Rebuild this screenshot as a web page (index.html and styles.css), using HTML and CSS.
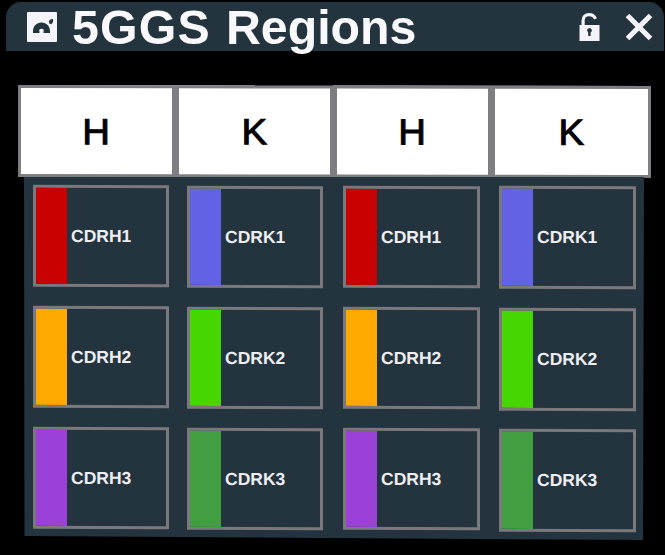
FILE: index.html
```html
<!DOCTYPE html>
<html lang="en">
<head>
<meta charset="utf-8">
<title>5GGS Regions</title>
<link rel="stylesheet" href="styles.css">
</head>
<body>
<main class="window">
  <header class="titlebar">
    <svg class="picture-icon" viewBox="0 0 30 30" aria-hidden="true"><rect width="30" height="30" rx="1" fill="#f5f4fa"/><path d="M6 21v-2c0-4.500 3.500-8.500 8.500-8.500S23 14.500 23 19v2h-6.500v-1.500c1-2-.2-2.800-2-2.800s-3 .8-2 2.800V21z" fill="#23343e"/><path d="M22 9l1.300-1.500 2.700-.5v3l-1.600 2.200-1.900-.4z" fill="#23343e"/></svg>
    <h1 class="title"><span class="code">5GGS</span> Regions</h1>
    <svg class="lock-icon" viewBox="0 0 21 28" aria-hidden="true"><path d="M4.100 13V7.500C4.100 4 6.600 1.600 10 1.600c2.900 0 5.300 1.400 6.500 4.200" fill="none" stroke="#f5f4fa" stroke-width="3.200"/><path d="M.5 12h20v16H.5z" fill="#f5f4fa"/><path d="M8 17.200a2.400 2.400 0 1 1 4.600 1.300l-1 1.200V23H9.200v-3.300z" fill="#23343e"/></svg>
    <svg class="close-icon" viewBox="0 0 28 28" aria-hidden="true"><path d="M2.500 2.500l23 23M25.500 2.500l-23 23" stroke="#f5f4fa" stroke-width="5.200"/></svg>
  </header>
  <section class="chains">
    <div class="chain"><span>H</span></div><div class="chain"><span>K</span></div><div class="chain"><span>H</span></div><div class="chain"><span>K</span></div>
  </section>
  <section class="panel">
    <div class="column">
      <div class="region"><i class="swatch red"></i><span>CDRH1</span></div>
      <div class="region"><i class="swatch orange"></i><span>CDRH2</span></div>
      <div class="region"><i class="swatch purple"></i><span>CDRH3</span></div>
    </div>
    <div class="column second">
      <div class="region"><i class="swatch blue"></i><span>CDRK1</span></div>
      <div class="region"><i class="swatch lime"></i><span>CDRK2</span></div>
      <div class="region"><i class="swatch green"></i><span>CDRK3</span></div>
    </div>
    <div class="column third">
      <div class="region"><i class="swatch red"></i><span>CDRH1</span></div>
      <div class="region"><i class="swatch orange"></i><span>CDRH2</span></div>
      <div class="region"><i class="swatch purple"></i><span>CDRH3</span></div>
    </div>
    <div class="column fourth">
      <div class="region"><i class="swatch blue"></i><span>CDRK1</span></div>
      <div class="region"><i class="swatch lime"></i><span>CDRK2</span></div>
      <div class="region"><i class="swatch green"></i><span>CDRK3</span></div>
    </div>
  </section>
</main>
</body>
</html>
```

FILE: styles.css
```css
* { box-sizing: border-box; }
body {
  margin: 0;
  background: #000;
  font-family: "Liberation Sans", Arial, sans-serif;
}
.window {
  width: 665px;
  height: 555px;
  overflow: hidden;
  padding-top: 2px;
}
.titlebar {
  display: flex;
  align-items: center;
  width: 658px;
  height: 49px;
  margin-left: 6px;
  padding: 0 11px 0 21px;
  border-radius: 15px 15px 0 0;
  background: #23343e;
}
.picture-icon { width: 30px; height: 30px; }
.title {
  margin: 1px auto 0 15px;
  font-size: 48.300px;
  line-height: 49px;
  word-spacing: 1.500px;
  color: #f9f8fc;
  white-space: nowrap;
}
.code { letter-spacing: 1.200px; }
.lock-icon { width: 21px; height: 28px; margin-right: 25px; }
.close-icon { width: 28px; height: 28px; }
.chains {
  display: grid;
  grid-template-columns: 157px 158px 158px 160px;
  height: 92px;
  margin: 34px 0 0 18px;
  transform: translateY(0.500px) skewY(0.080deg);
}
.chain {
  display: flex;
  align-items: center;
  justify-content: center;
  border: 3px solid #7e7d82;
  background: #fff;
  color: #000;
  font-size: 36.500px;
  -webkit-text-stroke: 1px #000;
}
.chain span { transform: translateY(1px) scaleX(1.05); }
.chain + .chain { border-left-width: 4px; }
.panel {
  display: grid;
  grid-template-columns: 135.500px 136px 136.500px 137px;
  column-gap: 19px;
  width: 620px;
  height: 364px;
  margin-left: 24px;
  padding: 8px 0 0 9px;
  background: #23343e;
  clip-path: polygon(0 0, 100% 0, 619px 363px, 0.500px 359px);
}
.column {
  display: grid;
  grid-template-rows: repeat(3, 102px);
  row-gap: 19px;
  align-content: start;
}
.second { padding-top: 0.500px; }
.third { padding-top: 1px; }
.fourth { padding-top: 1px; grid-template-rows: repeat(3, 102.500px); }
.region {
  display: flex;
  align-items: center;
  border: 3px solid #7b787d;
  color: #eeedf2;
  font-size: 17.500px;
  font-weight: 700;
  transform: skewY(0.150deg);
}
.third .region { margin-left: 0; }
.fourth .region { margin-left: 0.500px; margin-right: -0.500px; }
.second .region { margin-left: -0.700px; margin-right: 0.700px; }
.swatch {
  align-self: stretch;
  width: 31px;
  margin-right: 4px;
}
.red { background: #c80000; }
.orange { background: #ffa900; }
.purple { background: #9b41d7; }
.blue { background: #6262e4; }
.lime { background: #46d700; }
.green { background: #419e41; }
```
